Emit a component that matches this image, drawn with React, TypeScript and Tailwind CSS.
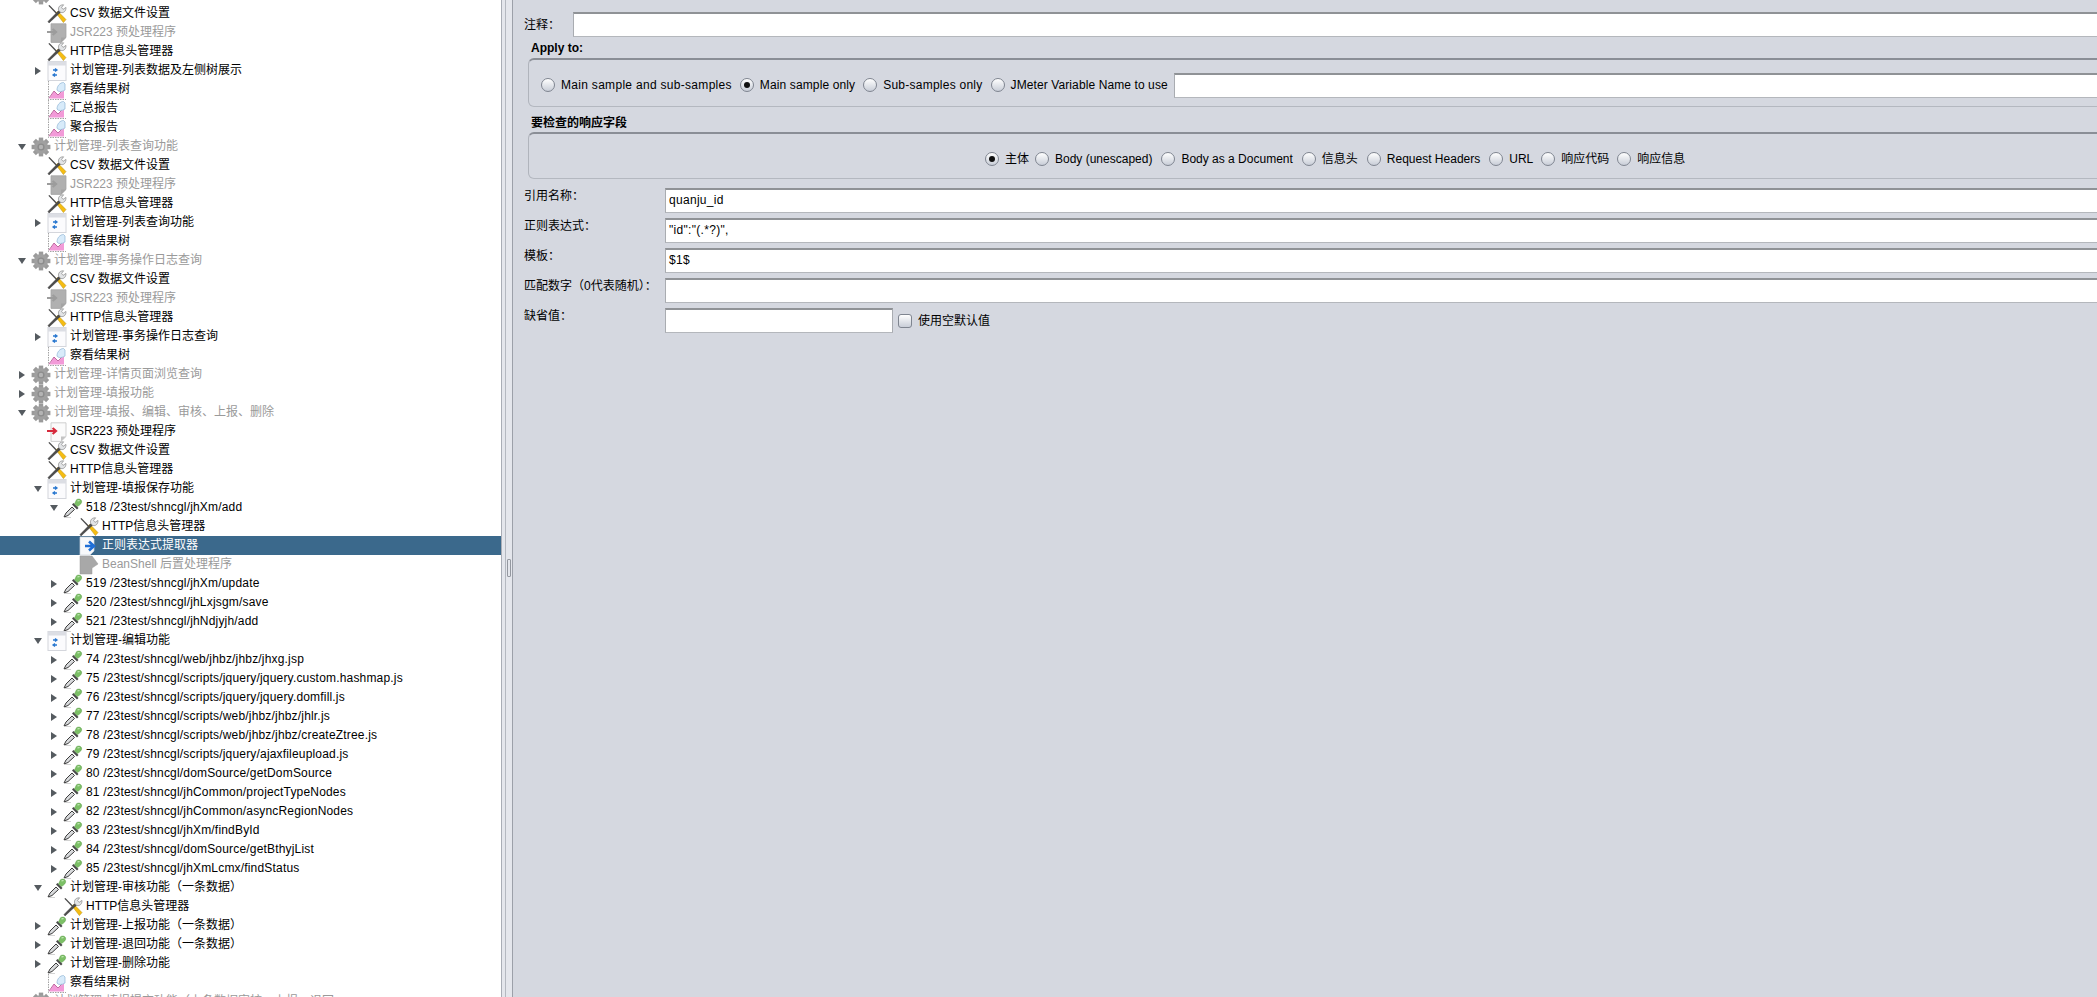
import React from "react";

type IconName = "gear" | "wrench" | "docGray" | "docRed" | "frag" | "graph" | "dropper" | "extract" | "postGray";
type Row = { l: number; a?: "open" | "closed"; i: IconName; t: string; d?: boolean; s?: boolean };

function Gear() {
  const teeth = [0, 45, 90, 135, 180, 225, 270, 315];
  return (
    <svg width="20" height="20" viewBox="0 0 20 20">
      {teeth.map((r) => (
        <rect key={r} x="7.8" y="0.6" width="4.4" height="5" fill="#9a9a9a" transform={`rotate(${r} 10 10)`} />
      ))}
      <circle cx="10" cy="10" r="7" fill="#a0a0a0" />
      <circle cx="10" cy="10" r="3.6" fill="#8c8c8c" />
      <circle cx="10" cy="10" r="2.2" fill="#b4b4b4" />
    </svg>
  );
}

function Wrench() {
  return (
    <svg width="20" height="20" viewBox="0 0 20 20">
      <path d="M1.4 1.8 L2.4 1 L10 8.8 L9 9.8 Z" fill="#4a4a4a" />
      <path d="M9 9 L11 7.4 L19 15.6 L16.4 18.6 Z" fill="#f6bd12" stroke="#b08a10" strokeWidth="0.5" />
      <path d="M2 19 L1 17.4 L11.8 6.6 L13.6 8.2 Z" fill="#4c4c4c" stroke="#2a2a2a" strokeWidth="0.4" />
      <path d="M11.6 6.4 C10.8 3 13 0.6 16.6 0.8 L14.6 3.4 L16 5.4 L19 3.4 C19.2 7 16.6 9.4 13.8 8.4 Z" fill="#e2e4e6" stroke="#787878" strokeWidth="0.6" />
    </svg>
  );
}

function Doc({ fill, arrow, fold }: { fill: string; arrow: string; fold: string }) {
  return (
    <svg width="20" height="20" viewBox="0 0 20 20">
      <path d="M4 0.8 H19 V14.5 L14 19.4 H4 Z" fill={fill} stroke={fold} strokeWidth="0.8" />
      <path d="M14 19.4 V14.5 H19 Z" fill={fold} />
      <path d="M0 9 H8 M5.6 6 L9 9 L5.6 12" fill="none" stroke={arrow} strokeWidth="2.2" />
    </svg>
  );
}

function Extract() {
  return (
    <svg width="20" height="20" viewBox="0 0 20 20">
      <path d="M1 1 H13 L15 3 V15 L11 19 H1 Z" fill="#f8f9fb" stroke="#cfd6de" strokeWidth="0.7" />
      <path d="M6 10 H13 M10 5.5 L15 10 L10 14.5" fill="none" stroke="#1f6fd6" strokeWidth="2.6" />
    </svg>
  );
}

function PostGray() {
  return (
    <svg width="20" height="20" viewBox="0 0 20 20">
      <path d="M1 1 H13 L19 9 L13 13 V19 H1 Z" fill="#a8a8a8" stroke="#9a9a9a" strokeWidth="0.5" />
    </svg>
  );
}

function Frag() {
  return (
    <svg width="20" height="20" viewBox="0 0 20 20">
      <rect x="1" y="0.5" width="18" height="19" fill="#fbfbfd" stroke="#d4d6dc" />
      <rect x="1" y="0.5" width="18" height="4" fill="#dcdee4" />
      <path d="M6 9 H10 M8 7.5 L10 9 L8 10.5" fill="none" stroke="#2a78d0" strokeWidth="1.3" />
      <path d="M10 14 H6 M8 12.5 L6 14 L8 15.5" fill="none" stroke="#2a78d0" strokeWidth="1.3" />
    </svg>
  );
}

function Graph() {
  return (
    <svg width="20" height="20" viewBox="0 0 20 20">
      <path d="M2 19 L7 11 L11 15 L17 10 V18.5 H2 Z" fill="#f29ad8" />
      <path d="M2 18 L7 11 L11 15 L17 9" fill="none" stroke="#b0508c" strokeWidth="0.8" />
      <path d="M10 10 C10 6 13 2.5 16.5 2.5 L18 4 V10 C15 12 11 12 10 10 Z" fill="#d8ebfa" stroke="#8fb4d4" strokeWidth="0.7" />
      <path d="M1.5 1 V19.5 H19" fill="none" stroke="#8c8c8c" strokeWidth="0.8" strokeDasharray="1.5 1" />
    </svg>
  );
}

function Dropper() {
  return (
    <svg width="20" height="20" viewBox="0 0 20 20">
      <path d="M1 19 L3 15 L9 9 L11.5 11.5 L5 17.5 Z" fill="#d8dadc" stroke="#3c3c3c" strokeWidth="1" />
      <path d="M9 6.5 L14 11.5 L15.5 10 L10.5 5 Z" fill="#4a4a4a" />
      <path d="M11.5 6 L13.5 1.8 C15 0.5 18 1 18.6 3 C19.2 5 17 7 14.5 8.5 Z" fill="#7cc066" stroke="#5a9a46" strokeWidth="0.5" />
      <path d="M14.5 3 L16.5 2.5" stroke="#cfeec4" strokeWidth="1.2" />
      <path d="M1 19.5 H8" stroke="#c8c8c8" strokeWidth="0.8" />
    </svg>
  );
}

function Icon({ n }: { n: IconName }) {
  switch (n) {
    case "gear":
      return <Gear />;
    case "wrench":
      return <Wrench />;
    case "docGray":
      return <Doc fill="#b0b0b0" arrow="#9c9c9c" fold="#a4a4a4" />;
    case "docRed":
      return <Doc fill="#fbfbfb" arrow="#d62a3c" fold="#c4c4c4" />;
    case "frag":
      return <Frag />;
    case "graph":
      return <Graph />;
    case "dropper":
      return <Dropper />;
    case "extract":
      return <Extract />;
    case "postGray":
      return <PostGray />;
  }
}

const CSV = "CSV 数据文件设置";
const JSR = "JSR223 预处理程序";
const HTTP = "HTTP信息头管理器";
const VIEW = "察看结果树";

const rows: Row[] = [
  { l: 0, a: "open", i: "gear", t: "", d: true },
  { l: 1, i: "wrench", t: CSV },
  { l: 1, i: "docGray", t: JSR, d: true },
  { l: 1, i: "wrench", t: HTTP },
  { l: 1, a: "closed", i: "frag", t: "计划管理-列表数据及左侧树展示" },
  { l: 1, i: "graph", t: VIEW },
  { l: 1, i: "graph", t: "汇总报告" },
  { l: 1, i: "graph", t: "聚合报告" },
  { l: 0, a: "open", i: "gear", t: "计划管理-列表查询功能", d: true },
  { l: 1, i: "wrench", t: CSV },
  { l: 1, i: "docGray", t: JSR, d: true },
  { l: 1, i: "wrench", t: HTTP },
  { l: 1, a: "closed", i: "frag", t: "计划管理-列表查询功能" },
  { l: 1, i: "graph", t: VIEW },
  { l: 0, a: "open", i: "gear", t: "计划管理-事务操作日志查询", d: true },
  { l: 1, i: "wrench", t: CSV },
  { l: 1, i: "docGray", t: JSR, d: true },
  { l: 1, i: "wrench", t: HTTP },
  { l: 1, a: "closed", i: "frag", t: "计划管理-事务操作日志查询" },
  { l: 1, i: "graph", t: VIEW },
  { l: 0, a: "closed", i: "gear", t: "计划管理-详情页面浏览查询", d: true },
  { l: 0, a: "closed", i: "gear", t: "计划管理-填报功能", d: true },
  { l: 0, a: "open", i: "gear", t: "计划管理-填报、编辑、审核、上报、删除", d: true },
  { l: 1, i: "docRed", t: JSR },
  { l: 1, i: "wrench", t: CSV },
  { l: 1, i: "wrench", t: HTTP },
  { l: 1, a: "open", i: "frag", t: "计划管理-填报保存功能" },
  { l: 2, a: "open", i: "dropper", t: "518 /23test/shncgl/jhXm/add" },
  { l: 3, i: "wrench", t: HTTP },
  { l: 3, i: "extract", t: "正则表达式提取器", s: true },
  { l: 3, i: "postGray", t: "BeanShell 后置处理程序", d: true },
  { l: 2, a: "closed", i: "dropper", t: "519 /23test/shncgl/jhXm/update" },
  { l: 2, a: "closed", i: "dropper", t: "520 /23test/shncgl/jhLxjsgm/save" },
  { l: 2, a: "closed", i: "dropper", t: "521 /23test/shncgl/jhNdjyjh/add" },
  { l: 1, a: "open", i: "frag", t: "计划管理-编辑功能" },
  { l: 2, a: "closed", i: "dropper", t: "74 /23test/shncgl/web/jhbz/jhbz/jhxg.jsp" },
  { l: 2, a: "closed", i: "dropper", t: "75 /23test/shncgl/scripts/jquery/jquery.custom.hashmap.js" },
  { l: 2, a: "closed", i: "dropper", t: "76 /23test/shncgl/scripts/jquery/jquery.domfill.js" },
  { l: 2, a: "closed", i: "dropper", t: "77 /23test/shncgl/scripts/web/jhbz/jhbz/jhlr.js" },
  { l: 2, a: "closed", i: "dropper", t: "78 /23test/shncgl/scripts/web/jhbz/jhbz/createZtree.js" },
  { l: 2, a: "closed", i: "dropper", t: "79 /23test/shncgl/scripts/jquery/ajaxfileupload.js" },
  { l: 2, a: "closed", i: "dropper", t: "80 /23test/shncgl/domSource/getDomSource" },
  { l: 2, a: "closed", i: "dropper", t: "81 /23test/shncgl/jhCommon/projectTypeNodes" },
  { l: 2, a: "closed", i: "dropper", t: "82 /23test/shncgl/jhCommon/asyncRegionNodes" },
  { l: 2, a: "closed", i: "dropper", t: "83 /23test/shncgl/jhXm/findById" },
  { l: 2, a: "closed", i: "dropper", t: "84 /23test/shncgl/domSource/getBthyjList" },
  { l: 2, a: "closed", i: "dropper", t: "85 /23test/shncgl/jhXmLcmx/findStatus" },
  { l: 1, a: "open", i: "dropper", t: "计划管理-审核功能（一条数据）" },
  { l: 2, i: "wrench", t: HTTP },
  { l: 1, a: "closed", i: "dropper", t: "计划管理-上报功能（一条数据）" },
  { l: 1, a: "closed", i: "dropper", t: "计划管理-退回功能（一条数据）" },
  { l: 1, a: "closed", i: "dropper", t: "计划管理-删除功能" },
  { l: 1, i: "graph", t: VIEW },
  { l: 0, a: "closed", i: "gear", t: "计划管理-填报提交功能（上条数据审核、上报、退回", d: true },
];

const indent = ["ml-[18px]", "ml-[34px]", "ml-[50px]", "ml-[66px]"];

function TreeRow({ r }: { r: Row }) {
  const isPath = /^\d/.test(r.t);
  return (
    <div className={`flex items-center h-[19px] shrink-0 whitespace-nowrap ${r.s ? "bg-[#3b698c] text-white" : ""}`}>
      <div className={`${indent[r.l]} w-[13px] flex items-center justify-start shrink-0`}>
        {r.a === "open" && <div className="w-0 h-0 border-x-[4px] border-x-transparent border-t-[6px] border-t-[#555b60]" />}
        {r.a === "closed" && <div className="ml-[1px] w-0 h-0 border-y-[4px] border-y-transparent border-l-[6px] border-l-[#555b60]" />}
      </div>
      <div className="w-[20px] h-[19px] flex items-center justify-center shrink-0">
        <Icon n={r.i} />
      </div>
      <span className={`ml-[3px] mb-[2px] ${r.d ? "text-[#9a9a9a]" : ""} ${isPath ? "tracking-[0.18px]" : ""}`}>{r.t}</span>
    </div>
  );
}

function Radio({ on, label, cls }: { on?: boolean; label: string; cls?: string }) {
  return (
    <div className={`flex items-center gap-[6px] whitespace-nowrap ${cls ?? ""}`}>
      <div className="w-[14px] h-[14px] rounded-full border border-[#7f8590] bg-linear-to-b from-white to-[#c9ced8] flex items-center justify-center shrink-0">
        {on && <div className="w-[6px] h-[6px] rounded-full bg-[#111]" />}
      </div>
      <span>{label}</span>
    </div>
  );
}

function Field({ label, value, top }: { label: string; value?: string; top?: string }) {
  return (
    <div className={`flex items-start h-[25px] ${top ?? "mt-[5px]"}`}>
      <label className="w-[141px] shrink-0 leading-[16px]">{label}</label>
      <div className="flex-1 h-[25px] bg-white border-t-2 border-t-[#8f9296] border-l border-l-[#a9acb1] border-b border-b-[#b4b7bc] pl-[3px] pb-[2px] flex items-center tracking-[0.3px]">
        {value}
      </div>
    </div>
  );
}

export default function App() {
  return (
    <div
      className="flex w-[2097px] h-[997px] overflow-hidden bg-white text-[12px] text-black"
      style={{ fontFamily: '"Liberation Sans","Noto Sans CJK SC",sans-serif' }}
    >
      <div className="w-[501px] h-[997px] shrink-0 overflow-hidden bg-white">
        <div className="flex flex-col -mt-[15px]">
          {rows.map((r, i) => (
            <TreeRow key={i} r={r} />
          ))}
        </div>
      </div>

      <div className="relative w-[12px] shrink-0 bg-[#e4e6ec] border-l border-l-[#a9adb6] border-r border-r-[#9ca0a9]">
        <div className="absolute left-[5px] top-[559px] w-[4px] h-[18px] border border-[#9498a0] rounded-[1px]" />
        <div className="absolute left-[3px] top-0 bottom-0 w-px bg-[#b4b8c0]" />
      </div>

      <div className="flex-1 min-w-0 bg-[#d5d8e0] pl-[11px] pt-[12px] overflow-hidden">
        <div className="flex h-[25px]">
          <label className="w-[49px] shrink-0 leading-[26px]">注释：</label>
          <div className="flex-1 bg-white border-t-2 border-t-[#8f9296] border-l border-l-[#a9acb1] border-b border-b-[#b4b7bc]" />
        </div>

        <div className="ml-[4px]">
          <div className="h-[21px] pl-[3px] font-bold leading-[23px]">Apply to:</div>
          <div className="h-[49px] rounded-l-[6px] border-t-2 border-t-[#8a8e96] border-l border-l-[#b0b4bc] border-b border-b-[#b4b8c0] flex items-center pl-[12px] pt-[4px]">
            <div className="flex items-center gap-[8px]">
              <Radio label="Main sample and sub-samples" cls="tracking-[0.3px]" />
              <Radio on label="Main sample only" cls="tracking-[0.12px]" />
              <Radio label="Sub-samples only" cls="tracking-[0.25px]" />
              <Radio label="JMeter Variable Name to use" cls="tracking-[0.1px]" />
            </div>
            <div className="flex-1 h-[25px] ml-[6px] bg-white border-t-2 border-t-[#8f9296] border-l border-l-[#a9acb1] border-b border-b-[#b4b7bc]" />
          </div>

          <div className="h-[25px] pl-[3px] font-bold leading-[32px]">要检查的响应字段</div>
          <div className="h-[47px] rounded-l-[6px] border-t-2 border-t-[#8a8e96] border-l border-l-[#b0b4bc] border-b border-b-[#b4b8c0] flex items-center pl-[456px] pt-[6px]">
            <div className="flex items-center gap-[9px]">
              <Radio on label="主体" cls="-mr-[3px]" />
              <Radio label="Body (unescaped)" />
              <Radio label="Body as a Document" />
              <Radio label="信息头" />
              <Radio label="Request Headers" />
              <Radio label="URL" cls="-mr-[1px]" />
              <Radio label="响应代码" cls="-mr-[1px]" />
              <Radio label="响应信息" />
            </div>
          </div>
        </div>

        <Field label="引用名称：" value="quanju_id" top="mt-[9px]" />
        <Field label="正则表达式：" value={'"id":"(.*?)",'} />
        <Field label="模板：" value="$1$" />
        <Field label="匹配数字（0代表随机）：" />
        <div className="flex items-start h-[25px] mt-[5px]">
          <label className="w-[141px] shrink-0 leading-[16px]">缺省值：</label>
          <div className="w-[228px] h-[25px] bg-white border-t-2 border-t-[#8f9296] border-x border-x-[#a9acb1] border-b border-b-[#b4b7bc]" />
          <div className="flex items-center h-[25px] ml-[5px] gap-[6px]">
            <div className="w-[14px] h-[14px] rounded-[3px] border border-[#7f8590] bg-linear-to-b from-white to-[#c9ced8]" />
            <span>使用空默认值</span>
          </div>
        </div>
      </div>
    </div>
  );
}
